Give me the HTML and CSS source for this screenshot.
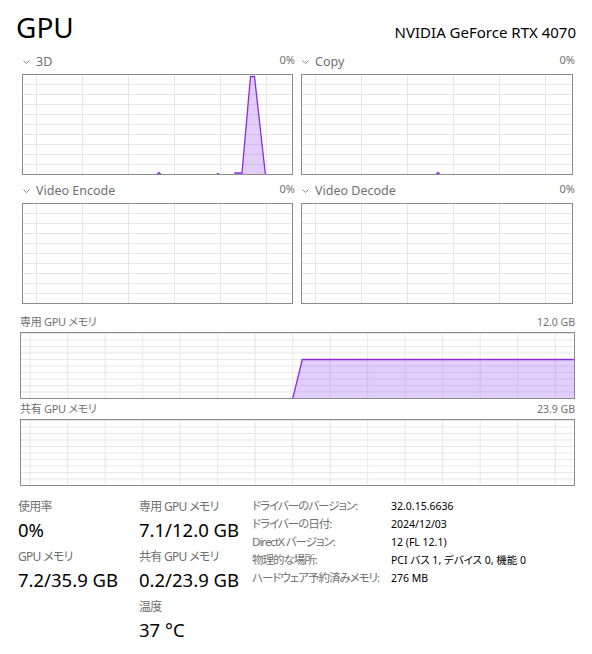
FILE: index.html
```html
<!DOCTYPE html>
<html lang="ja">
<head>
  <meta charset="UTF-8" />
  <meta name="viewport" content="width=device-width, initial-scale=1.0"/>
  <title>GPU</title>
  <link rel="stylesheet" href="styles.css">
</head>
<body>
  <div class="page">
    <header class="header">
      <h1 class="title">GPU</h1>
      <div class="adapter">NVIDIA GeForce RTX 4070</div>
    </header>

    <!-- engine graphs -->
    <section class="engines">
      <div class="engine">
        <div class="graph-head">
          <span class="engine-name"><svg class="chevron" viewBox="0 0 7 4"><path d="M0.5 0.5L3.5 3.5L6.5 0.5"/></svg>3D</span>
          <span class="head-value">0%</span>
        </div>
        <div class="graph graph-engine">
          <svg viewBox="0 0 269 99" preserveAspectRatio="none">
            <path class="area" d="M0 100H133L136 97.5L139 100H193L195 98.5L197 100H212V98H219L227.5 1.5H231.5L242.5 100H269V100H0Z"/>
            <path class="line" d="M0 100.5H133L136 97.5L139 100.5H193L195 98.5L197 100.5H212V98H219L227.5 1.5H231.5L242.5 100.5H269"/>
          </svg>
        </div>
      </div>

      <div class="engine">
        <div class="graph-head">
          <span class="engine-name"><svg class="chevron" viewBox="0 0 7 4"><path d="M0.5 0.5L3.5 3.5L6.5 0.5"/></svg>Copy</span>
          <span class="head-value">0%</span>
        </div>
        <div class="graph graph-engine">
          <svg viewBox="0 0 270 99" preserveAspectRatio="none">
            <path class="area" d="M0 100H133L136 97.5L139 100H270Z"/>
            <path class="line" d="M0 100.5H133L136 97.5L139 100.5H270"/>
          </svg>
        </div>
      </div>

      <div class="engine">
        <div class="graph-head">
          <span class="engine-name"><svg class="chevron" viewBox="0 0 7 4"><path d="M0.5 0.5L3.5 3.5L6.5 0.5"/></svg>Video Encode</span>
          <span class="head-value">0%</span>
        </div>
        <div class="graph graph-engine"></div>
      </div>

      <div class="engine">
        <div class="graph-head">
          <span class="engine-name"><svg class="chevron" viewBox="0 0 7 4"><path d="M0.5 0.5L3.5 3.5L6.5 0.5"/></svg>Video Decode</span>
          <span class="head-value">0%</span>
        </div>
        <div class="graph graph-engine"></div>
      </div>
    </section>

    <!-- memory graphs -->
    <section class="memory">
      <div class="graph-head mem-head">
        <span class="mem-name">専用 GPU メモリ</span>
        <span>12.0 GB</span>
      </div>
      <div class="graph graph-mem">
        <svg viewBox="0 0 553 65" preserveAspectRatio="none">
          <path class="area" d="M0 66H271.5L281.3 26.5H554V66Z"/>
          <path class="line" d="M0 66.5H271.5L281.3 26.5H554"/>
        </svg>
      </div>

      <div class="graph-head mem-head">
        <span class="mem-name">共有 GPU メモリ</span>
        <span>23.9 GB</span>
      </div>
      <div class="graph graph-mem"></div>
    </section>

    <!-- summary -->
    <section class="stats">
      <div class="stat-col first">
        <div class="stat">
          <div class="stat-label">使用率</div>
          <div class="stat-value">0%</div>
        </div>
        <div class="stat">
          <div class="stat-label">GPU メモリ</div>
          <div class="stat-value">7.2/35.9 GB</div>
        </div>
      </div>

      <div class="stat-col second">
        <div class="stat">
          <div class="stat-label">専用 GPU メモリ</div>
          <div class="stat-value">7.1/12.0 GB</div>
        </div>
        <div class="stat">
          <div class="stat-label">共有 GPU メモリ</div>
          <div class="stat-value">0.2/23.9 GB</div>
        </div>
        <div class="stat">
          <div class="stat-label">温度</div>
          <div class="stat-value">37 °C</div>
        </div>
      </div>

      <dl class="details">
        <dt>ドライバーのバージョン:</dt><dd>32.0.15.6636</dd>
        <dt>ドライバーの日付:</dt><dd>2024/12/03</dd>
        <dt>DirectX バージョン:</dt><dd>12 (FL 12.1)</dd>
        <dt>物理的な場所:</dt><dd>PCI バス 1, デバイス 0, 機能 0</dd>
        <dt>ハードウェア予約済みメモリ:</dt><dd>276 MB</dd>
      </dl>
    </section>
  </div>
</body>
</html>
```

FILE: styles.css
```css
body {
  margin: 0;
  background: #fff;
  color: #000;
  font-family: "Noto Sans", "Noto Sans CJK JP", sans-serif;
  font-feature-settings: "palt";
}

.page {
  width: 592px;
  height: 654px;
  overflow: hidden;
}

/* header */
.header {
  display: flex;
  justify-content: space-between;
  align-items: baseline;
  padding: 10px 16px 0 16px;
}

.title {
  margin: 0;
  font-size: 28px;
  font-weight: normal;
  line-height: 34px;
}

.adapter {
  font-size: 15px;
}

/* graphs */
.graph-head {
  display: flex;
  justify-content: space-between;
  align-items: baseline;
  height: 16px;
  font-size: 11px;
  line-height: 16px;
  color: #707070;
}

.engine-name {
  display: flex;
  align-items: center;
  font-size: 12.5px;
}

.chevron {
  width: 7px;
  height: 4px;
  margin: 0 6px 0 1px;
  fill: none;
  stroke: #8a8a8a;
  stroke-width: 1;
}

.engines {
  display: grid;
  grid-template-columns: 271px 272px;
  column-gap: 8px;
  row-gap: 7px;
  margin: 9px 0 0 22px;
}

.engine .graph-head {
  margin: 0 -2px 5px 0;
  line-height: 14px;
}

.graph {
  border: 1px solid #8b8b8b;
  background-color: #fff;
  background-image:
    linear-gradient(to right, #e6e6e6 1px, transparent 1px),
    linear-gradient(to bottom, #e6e6e6 1px, transparent 1px);
}

.graph svg {
  display: block;
  width: 100%;
  height: 100%;
}

.graph-engine {
  height: 99px;
  background-size: 46px 10px;
  background-position: 13px 9px;
}

.graph-mem {
  height: 65px;
  background-size: 37.5px 6.5px;
  background-position: 8.7px 6.5px;
}

.area {
  fill: rgba(150, 80, 240, 0.28);
}

.line {
  fill: none;
  stroke: #8a2be8;
  stroke-width: 1.3;
}

.memory {
  margin: 10px 17px 0 20px;
}

.mem-head {
  margin-bottom: 2px;
  font-size: 10.5px;
}

.mem-name {
  font-size: 11px;
  letter-spacing: -0.3px;
}

.graph-mem + .mem-head {
  margin-top: 2px;
}

/* summary */
.stats {
  display: flex;
  align-items: flex-start;
  margin-top: 11px;
  padding-left: 18px;
}

.stat-col.first {
  width: 121px;
}

.stat-col.second {
  width: 113px;
}

.stat {
  margin-bottom: 4px;
}

.stat-label {
  font-size: 12px;
  line-height: 20px;
  letter-spacing: -0.7px;
  color: #707070;
}

.stat-value {
  font-size: 18.5px;
  line-height: 26px;
}

.details {
  display: grid;
  grid-template-columns: 139px max-content;
  margin: 0;
  line-height: 18px;
}

.details dt {
  font-size: 11.5px;
  letter-spacing: -1px;
  white-space: nowrap;
  color: #707070;
}

.details dd {
  margin: 0;
  font-size: 10.5px;
}
```
